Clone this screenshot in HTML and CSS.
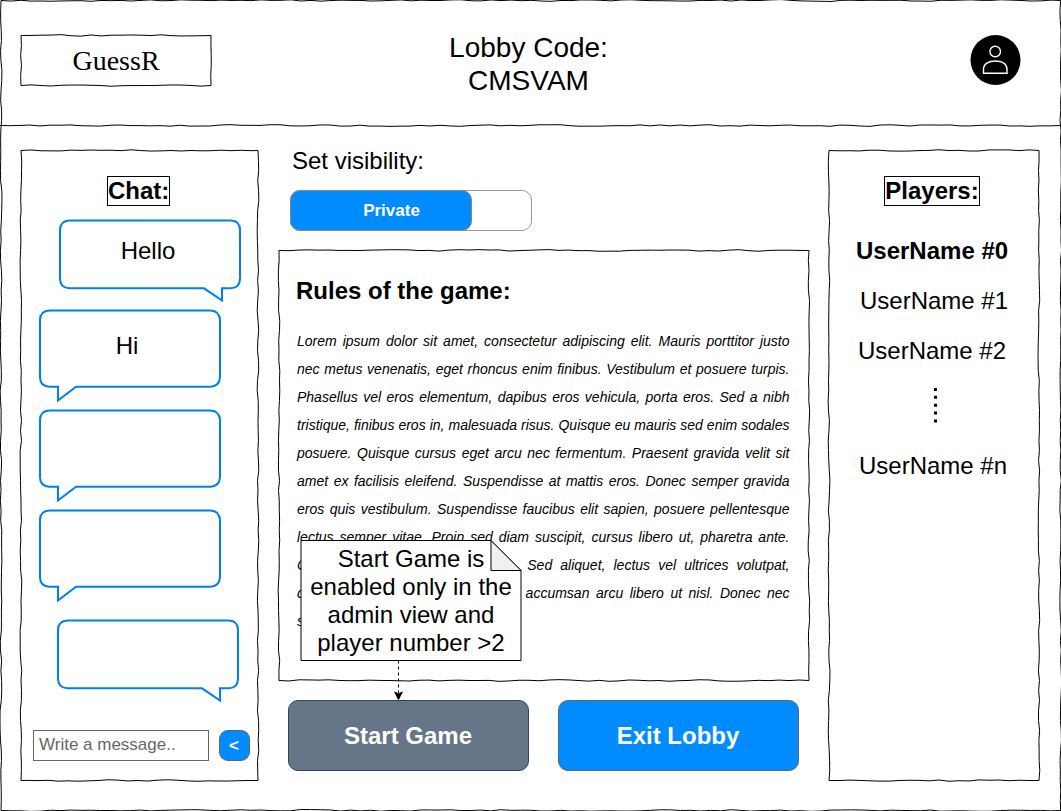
FILE: index.html
```html
<!DOCTYPE html>
<html lang="en">
<head>
<meta charset="utf-8">
<title>GuessR Lobby</title>
<link rel="stylesheet" href="styles.css">
</head>
<body>
<div class="app sketch" data-seed="3">
  <header class="header">
    <div class="logo sketch" data-seed="5">GuessR</div>
    <h1 class="lobby-code">Lobby Code:<br>CMSVAM</h1>
    <svg class="avatar" viewBox="0 0 51 50">
      <circle cx="25.5" cy="25" r="25" fill="#000"/>
      <circle cx="25.200" cy="16.500" r="5.300" fill="none" stroke="#fff" stroke-width="1.4"/>
      <path d="M13.500 38.300V34.500C13.500 29 18.500 26 25.300 26S37 29 37 34.500V38.300Z" fill="none" stroke="#fff" stroke-width="1.4"/>
    </svg>
    <div class="divider sketch-line" data-seed="9"></div>
  </header>
  <main class="main">
    <section class="chat sketch" data-seed="21">
      <h2 class="boxed">Chat:</h2>
      <div class="messages">
        <div class="bubble mine first">
          <svg viewBox="0 0 184 83"><path d="M11.500 1.500H173Q182 2 182 11V59.500Q182 69 173 69.300H164V81.500L146 69.300H11.500Q2 69 2 59.500V11Q2 2 11.500 1.500Z"/></svg>
          <span>Hello</span>
        </div>
        <div class="bubble theirs">
          <svg viewBox="0 0 184 93"><path d="M11.500 1.500H172.500Q181.500 2 182 11V68Q181.500 77.400 172.500 77.700H38L20 91.500V77.700H11.500Q2 77.400 2 68V11Q2 2 11.500 1.500Z"/></svg>
          <span>Hi</span>
        </div>
        <div class="bubble theirs">
          <svg viewBox="0 0 184 93"><path d="M11.500 1.500H172.500Q181.500 2 182 11V68Q181.500 77.400 172.500 77.700H38L20 91.500V77.700H11.500Q2 77.400 2 68V11Q2 2 11.500 1.500Z"/></svg>
        </div>
        <div class="bubble theirs">
          <svg viewBox="0 0 184 93"><path d="M11.500 1.500H172.500Q181.500 2 182 11V68Q181.500 77.400 172.500 77.700H38L20 91.500V77.700H11.500Q2 77.400 2 68V11Q2 2 11.500 1.500Z"/></svg>
        </div>
        <div class="bubble mine last">
          <svg viewBox="0 0 184 83"><path d="M11.500 1.500H173Q182 2 182 11V59.500Q182 69 173 69.300H164V81.500L146 69.300H11.500Q2 69 2 59.500V11Q2 2 11.500 1.500Z"/></svg>
        </div>
      </div>
      <div class="composer">
        <div class="input">Write a message..</div>
        <button class="send">&lt;</button>
      </div>
    </section>

    <section class="center">
      <div class="visibility">
        <div class="label">Set visibility:</div>
        <div class="toggle"><div class="thumb">Private</div></div>
      </div>
      <article class="rules sketch" data-seed="33">
        <h2>Rules of the game:</h2>
        <div class="rules-text">
          <p>Lorem ipsum dolor sit amet, consectetur adipiscing elit. Mauris porttitor justo</p>
          <p>nec metus venenatis, eget rhoncus enim finibus. Vestibulum et posuere turpis.</p>
          <p>Phasellus vel eros elementum, dapibus eros vehicula, porta eros. Sed a nibh</p>
          <p>tristique, finibus eros in, malesuada risus. Quisque eu mauris sed enim sodales</p>
          <p>posuere. Quisque cursus eget arcu nec fermentum. Praesent gravida velit sit</p>
          <p>amet ex facilisis eleifend. Suspendisse at mattis eros. Donec semper gravida</p>
          <p>eros quis vestibulum. Suspendisse faucibus elit sapien, posuere pellentesque</p>
          <p>lectus semper vitae. Proin sed diam suscipit, cursus libero ut, pharetra ante.</p>
          <p>Curabitur cursus tempor nec nisi. Sed aliquet, lectus vel ultrices volutpat,</p>
          <p>dapibus quis eleifend tristique non accumsan arcu libero ut nisl. Donec nec</p>
          <p class="end">sapien.</p>
        </div>
        <aside class="note">
          <svg class="note-shape" viewBox="0 0 222 161">
            <path d="M192 8H221V31H192Z" fill="#fff"/>
            <path d="M1 .5H191L221 30.500V120.500H1Z" fill="#fff" stroke="#000"/>
            <path d="M191 .5V30.500H221Z" fill="#f0f0f0" stroke="#000"/>
            <path d="M98.500 120.500V154" stroke="#000" stroke-dasharray="3 3"/>
            <path d="M98.500 159.500L94.700 152L98.500 153.900L102.300 152Z" stroke="#000"/>
          </svg>
          <div class="note-text">Start Game is<br>enabled only in the<br>admin view and<br>player number &gt;2</div>
        </aside>
      </article>
      <div class="actions">
        <button class="btn start">Start Game</button>
        <button class="btn exit">Exit Lobby</button>
      </div>
    </section>

    <section class="players sketch" data-seed="47">
      <h2 class="boxed">Players:</h2>
      <ul>
        <li class="admin">UserName #0</li>
        <li class="p1">UserName #1</li>
        <li class="p2">UserName #2</li>
        <li class="more"><svg viewBox="0 0 3 36"><path d="M1.500 0V36" stroke="#000" stroke-width="3" stroke-dasharray="3 4.850"/></svg></li>
        <li class="pn">UserName #n</li>
      </ul>
    </section>
  </main>
</div>
<script src="sketch.js"></script>
</body>
</html>
```

FILE: styles.css
```css
* { box-sizing: border-box; margin: 0; padding: 0; }
body {
  width: 1061px;
  height: 811px;
  overflow: hidden;
  background: #fff;
  color: #000;
  font-family: "Liberation Sans", Arial, sans-serif;
  font-size: 24px;
  line-height: 28px;
}
h1, h2 { font-size: inherit; }
.sketch, .sketch-line { position: relative; }
.sketch-border {
  position: absolute;
  inset: 0;
  width: 100%;
  height: 100%;
  overflow: visible;
  pointer-events: none;
  fill: none;
  stroke: #000;
  stroke-width: 1;
}
.app { width: 1061px; height: 811px; display: flex; flex-direction: column; }

.header {
  height: 125px;
  display: grid;
  grid-template-columns: 190px 1fr 51px;
  grid-template-rows: 125px 1px;
  padding: 0 40px 0 21px;
}
.logo {
  height: 50px;
  margin-top: 35px;
  font: 28px/51px "Liberation Serif", "Times New Roman", serif;
  text-align: center;
}
.lobby-code {
  font-size: 28px;
  font-weight: 400;
  line-height: 33px;
  text-align: center;
  padding: 31px 124px 0 0;
}
.avatar { width: 51px; height: 50px; margin-top: 35px; }
.divider { grid-column: 1 / -1; margin: 0 -40px 0 -21px; height: 1px; }

.main {
  flex: 1;
  display: grid;
  grid-template-columns: 237px 530px 210px;
  grid-template-rows: 630px;
  column-gap: 20px;
  padding: 25px 22px 30px 21px;
}
.main > .center { margin-left: 1px; margin-right: -1px; }
.main > .players { margin-left: 1px; margin-right: -1px; }
.boxed {
  width: max-content;
  height: 30px;
  margin: 0 auto;
  border: 1px solid #000;
  line-height: 28px;
}

.chat { display: flex; flex-direction: column; padding-top: 26px; }
.chat .boxed { margin-left: 86px; }
.messages { height: 483px; margin-top: 13px; }
.bubble { display: grid; width: 184px; height: 93px; margin-bottom: 7px; justify-items: center; }
.bubble > * { grid-area: 1 / 1; }
.bubble svg { width: 184px; fill: #fff; stroke: #0080f0; stroke-width: 2; }
.bubble span { position: relative; margin: 18px 4px 0 0; }
.bubble.mine { height: 83px; }
.bubble.first { margin-left: 37px; }
.bubble.last { margin: 17px 0 0 35px; }
.bubble.theirs { margin-left: 17px; }
.bubble.theirs span { margin-top: 23px; margin-right: 6px; }
.composer { display: flex; gap: 10px; margin: 28px 0 0 12px; }
.input {
  width: 176px;
  height: 31px;
  padding-left: 5px;
  border: 1px solid #666;
  color: #666;
  font-size: 17px;
  line-height: 27px;
}
.send {
  width: 31px;
  height: 31px;
  padding-right: 1px;
  border: 1px solid #666;
  border-radius: 9px;
  background: #008cff;
  color: #fff;
  font: bold 17px/29px "Liberation Sans", Arial, sans-serif;
}

.center { display: flex; flex-direction: column; }
.visibility { height: 100px; padding-left: 11px; }
.label { padding-left: 2px; line-height: 22px; height: 40px; }
.toggle { width: 242px; height: 41px; border: 1px solid #999; border-radius: 10px; }
.thumb {
  width: 182px;
  height: 41px;
  margin: -1px;
  padding-left: 21px;
  border: 1px solid #888;
  border-radius: 10px;
  background: #008cff;
  color: #fff;
  font-size: 17px;
  font-weight: bold;
  line-height: 39px;
  text-align: center;
}
.rules { height: 430px; padding: 27px 19px 0 18px; }
.rules h2 { margin-left: -1px; }
.rules-text {
  width: 492.5px;
  margin-top: 22px;
  font-size: 14px;
  font-style: italic;
}
.rules-text p { text-align: justify; text-align-last: justify; white-space: nowrap; }
.rules-text .end { text-align-last: left; }
.note { position: absolute; left: 21px; top: 290px; width: 222px; height: 161px; z-index: 2; }
.note-shape { position: absolute; inset: 0; width: 222px; height: 161px; }
.note-text { position: relative; padding-top: 5px; text-align: center; }
.actions { display: flex; gap: 29px; padding: 20px 0 0 9px; }
.btn {
  width: 241px;
  height: 71px;
  padding-right: 1px;
  border: 1px solid #666;
  border-radius: 10px;
  color: #fff;
  font: bold 24px/69px "Liberation Sans", Arial, sans-serif;
}
.start { background: #647687; border-color: #314354; }
.exit { background: #008cff; }

.players { padding-top: 26px; }
.players .boxed { margin-left: 55px; width: 96px; text-align: center; }
.players ul { list-style: none; margin-top: 31px; }
.players li { height: 28px; margin-bottom: 22px; }
.players .admin { font-weight: bold; padding-left: 27px; }
.players .p1 { padding-left: 31px; }
.players .p2 { padding-left: 29px; margin-bottom: 23px; }
.players .more { height: 36px; margin: 0 0 28px 105px; line-height: 0; }
.players .more svg { width: 3px; height: 36px; }
.players .pn { padding-left: 30px; }
```

FILE: sketch.js
```javascript
// Hand-drawn borders: every edge is cut into 10px steps that wander slightly.
function random(seed) {
  let s = seed * 7919;
  return () => {
    s = (s * 1103515245 + 12345) % 2147483648;
    return s / 2147483648;
  };
}
function edge(x1, y1, x2, y2, rnd) {
  const length = Math.hypot(x2 - x1, y2 - y1);
  const dx = (x2 - x1) / length;
  const dy = (y2 - y1) / length;
  let path = "";
  let offset = 0;
  for (let d = 10; d < length - 4; d += 10) {
    offset = offset * 0.3 + (rnd() - 0.5) * 1.5;
    path += `L${(x1 + dx * d - dy * offset).toFixed(2)} ${(y1 + dy * d + dx * offset).toFixed(2)}`;
  }
  return path + `L${x2} ${y2}`;
}
document.querySelectorAll(".sketch, .sketch-line").forEach((el) => {
  const rnd = random(Number(el.dataset.seed));
  const w = el.offsetWidth;
  const h = el.offsetHeight;
  let d;
  if (el.classList.contains("sketch-line")) {
    d = "M0 .5" + edge(0, 0.5, w, 0.5, rnd);
  } else {
    const outer = el.classList.contains("app");
    const l = outer ? 1 : 0;
    const t = 0.5;
    const r = outer ? w - 0.3 : w;
    const b = outer ? h - 0.5 : h + 0.5;
    d = `M${l} ${t}` + edge(l, t, r, t, rnd) + edge(r, t, r, b, rnd) + edge(r, b, l, b, rnd) + edge(l, b, l, t, rnd) + "Z";
  }
  const svg = document.createElementNS("http://www.w3.org/2000/svg", "svg");
  svg.setAttribute("class", "sketch-border");
  const path = document.createElementNS("http://www.w3.org/2000/svg", "path");
  path.setAttribute("d", d);
  svg.appendChild(path);
  el.prepend(svg);
});
```
